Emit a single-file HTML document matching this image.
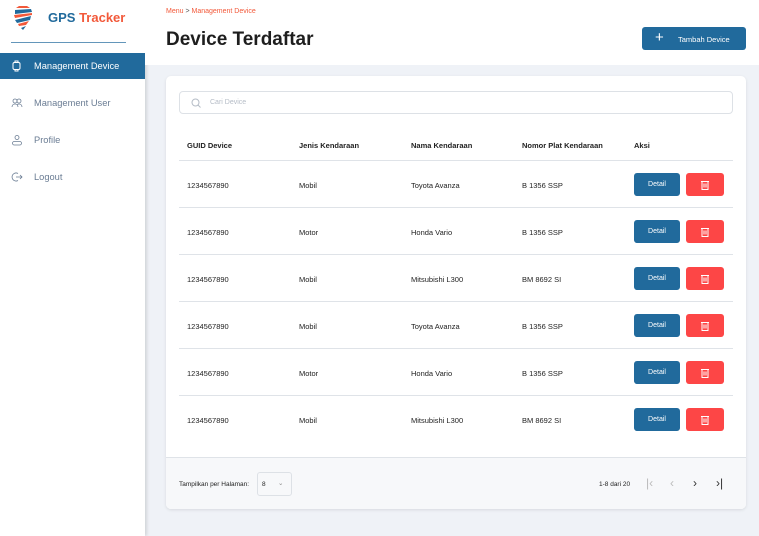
<!DOCTYPE html>
<html><head><meta charset="utf-8"><style>
*{box-sizing:border-box;margin:0;padding:0}
body{width:759px;height:536px;overflow:hidden;background:#eff2f7;font-family:"Liberation Sans",sans-serif;position:relative}
.side{position:absolute;left:0;top:0;width:145px;height:536px;background:#fff;box-shadow:2px 0 3px rgba(0,0,0,.12)}
.logo{position:absolute;left:48px;top:10px;font-weight:bold;font-size:13px;color:#216a9c}
.logo span{color:#f2593a}
.sep{position:absolute;left:11px;top:42px;width:115px;height:1px;background:#216a9c;opacity:.7}
.nav{position:absolute;left:0;width:145px;height:26px;font-size:9.3px;color:#6b7d94;padding-left:34px;display:flex;align-items:center}
.nav.act{background:#216a9c;color:#fff}
.nav svg{position:absolute;left:11px;top:7px}
.head{position:absolute;left:145px;top:0;width:614px;height:65px;background:#fff}
.crumb{position:absolute;left:166px;top:8px;font-size:7px;color:#f2593a}
.crumb b{color:#555;font-weight:normal}
h1{position:absolute;left:166px;top:29px;font-size:19px;color:#1e1e1e}
.add{position:absolute;left:642px;top:27px;width:104px;height:23px;background:#216a9c;border-radius:3px;color:#fff;font-size:7.5px}
.add span{position:absolute;left:36px;top:8px}
.add i{position:absolute;left:13px;top:3px;font-style:normal;font-size:15px;line-height:15px}
.card{position:absolute;left:166px;top:76px;width:580px;height:433px;background:#fff;border-radius:5px;box-shadow:0 1px 3px rgba(0,0,0,.1);overflow:hidden}
.search{position:absolute;left:13px;top:15px;width:554px;height:23px;border:1px solid #dde1e6;border-radius:4px;font-size:7px;color:#b5bcc6}
.search span{position:absolute;left:30px;top:7px}
.search svg{position:absolute;left:11px;top:6px}
.th{position:absolute;top:65px;font-size:7.5px;color:#222;font-weight:bold}
.row{position:absolute;left:13px;width:554px;height:47px;border-top:1px solid #dfe3e8;font-size:7.5px;color:#222}
.row span{position:absolute;top:20px}
.det{position:absolute;left:455px;top:12px;width:46px;height:23px;background:#216a9c;border-radius:3px;color:#fff;font-size:7px}
.det b{position:absolute;left:0;width:46px;text-align:center;top:8px;font-weight:normal}
.del{position:absolute;left:507px;top:12px;width:38px;height:23px;background:#fd4646;border-radius:3px}
.del svg{position:absolute;left:14px;top:7px}
.foot{position:absolute;left:0;top:381px;width:580px;height:52px;background:#f7f8fa;border-top:1px solid #dfe3e8;font-size:6.5px;color:#222}
.sel{position:absolute;left:91px;top:14px;width:35px;height:24px;border:1px solid #dde1e6;border-radius:3px;font-size:6.5px}
.pg{position:absolute;top:18px;font-size:12px;color:#bbb}
</style></head><body>
<div class="side">
<svg style="position:absolute;left:12px;top:5px" width="22" height="26" viewBox="0 0 22 26"><path d="M7 1h8l3 2H4z" fill="#f2593a"/><path d="M3 5l16-1 1 3-17 2z" fill="#216a9c"/><path d="M2 10l18-2v2L3 13z" fill="#f2593a"/><path d="M3 15l16-4-1 4-13 3z" fill="#216a9c"/><path d="M6 19l11-3-3 4-7 1z" fill="#f2593a"/><path d="M9 23l5-2-3 4z" fill="#216a9c"/></svg>
<div class="logo">GPS <span>Tracker</span></div>
<div class="sep"></div>
<div class="nav act" style="top:53px"><svg width="11" height="12" viewBox="0 0 11 12" fill="none" stroke="#fff"><rect x="2" y="2.5" width="7" height="7" rx="1.5"/><path d="M4 2.5V1h3v1.5M4 9.5V11h3V9.5"/></svg>Management Device</div>
<div class="nav" style="top:90px"><svg width="12" height="12" viewBox="0 0 12 12" fill="none" stroke="#6b7d94" stroke-width=".8"><circle cx="4" cy="4" r="2"/><circle cx="8" cy="4" r="2"/><path d="M1 10c0-2 1.5-3 3-3s3 1 3 3M6 8c.5-1 1-1 2-1 1.5 0 3 1 3 3"/></svg>Management User</div>
<div class="nav" style="top:127px"><svg width="12" height="12" viewBox="0 0 12 12" fill="none" stroke="#6b7d94" stroke-width=".8"><circle cx="6" cy="3.5" r="2"/><rect x="1.5" y="7.5" width="9" height="3.5" rx="1.7"/></svg>Profile</div>
<div class="nav" style="top:164px"><svg width="12" height="12" viewBox="0 0 12 12" fill="none" stroke="#6b7d94" stroke-width=".8"><path d="M7 2.5A4 4 0 1 0 7 9.5M5 6h6M9 4l2 2-2 2"/></svg>Logout</div>
</div>
<div class="head"></div>
<div class="crumb"><b style="color:#f2593a">Menu</b> <b>&gt;</b> Management Device</div>
<h1>Device Terdaftar</h1>
<div class="add"><i>+</i><span>Tambah Device</span></div>
<div class="card">
<div class="search"><svg width="10" height="10" viewBox="0 0 10 10" fill="none" stroke="#b5bcc6"><circle cx="4.5" cy="4.5" r="3.5"/><path d="M7 7l2.5 2.5"/></svg><span>Cari Device</span></div>
<div class="th" style="left:21px">GUID Device</div>
<div class="th" style="left:133px">Jenis Kendaraan</div>
<div class="th" style="left:245px">Nama Kendaraan</div>
<div class="th" style="left:356px">Nomor Plat Kendaraan</div>
<div class="th" style="left:468px">Aksi</div>
<div class="row" style="top:84px"><span style="left:8px">1234567890</span><span style="left:120px">Mobil</span><span style="left:232px">Toyota Avanza</span><span style="left:343px">B 1356 SSP</span><div class="det"><b>Detail</b></div><div class="del"><svg width="10" height="10" viewBox="0 0 10 10" fill="none" stroke="#fff"><rect x="2" y="1.5" width="6" height="8"/><path d="M1 1.5h8M4 3.5v4M6 3.5v4"/></svg></div></div>
<div class="row" style="top:131px"><span style="left:8px">1234567890</span><span style="left:120px">Motor</span><span style="left:232px">Honda Vario</span><span style="left:343px">B 1356 SSP</span><div class="det"><b>Detail</b></div><div class="del"><svg width="10" height="10" viewBox="0 0 10 10" fill="none" stroke="#fff"><rect x="2" y="1.5" width="6" height="8"/><path d="M1 1.5h8M4 3.5v4M6 3.5v4"/></svg></div></div>
<div class="row" style="top:178px"><span style="left:8px">1234567890</span><span style="left:120px">Mobil</span><span style="left:232px">Mitsubishi L300</span><span style="left:343px">BM 8692 SI</span><div class="det"><b>Detail</b></div><div class="del"><svg width="10" height="10" viewBox="0 0 10 10" fill="none" stroke="#fff"><rect x="2" y="1.5" width="6" height="8"/><path d="M1 1.5h8M4 3.5v4M6 3.5v4"/></svg></div></div>
<div class="row" style="top:225px"><span style="left:8px">1234567890</span><span style="left:120px">Mobil</span><span style="left:232px">Toyota Avanza</span><span style="left:343px">B 1356 SSP</span><div class="det"><b>Detail</b></div><div class="del"><svg width="10" height="10" viewBox="0 0 10 10" fill="none" stroke="#fff"><rect x="2" y="1.5" width="6" height="8"/><path d="M1 1.5h8M4 3.5v4M6 3.5v4"/></svg></div></div>
<div class="row" style="top:272px"><span style="left:8px">1234567890</span><span style="left:120px">Motor</span><span style="left:232px">Honda Vario</span><span style="left:343px">B 1356 SSP</span><div class="det"><b>Detail</b></div><div class="del"><svg width="10" height="10" viewBox="0 0 10 10" fill="none" stroke="#fff"><rect x="2" y="1.5" width="6" height="8"/><path d="M1 1.5h8M4 3.5v4M6 3.5v4"/></svg></div></div>
<div class="row" style="top:319px"><span style="left:8px">1234567890</span><span style="left:120px">Mobil</span><span style="left:232px">Mitsubishi L300</span><span style="left:343px">BM 8692 SI</span><div class="det"><b>Detail</b></div><div class="del"><svg width="10" height="10" viewBox="0 0 10 10" fill="none" stroke="#fff"><rect x="2" y="1.5" width="6" height="8"/><path d="M1 1.5h8M4 3.5v4M6 3.5v4"/></svg></div></div>
<div class="foot">
<span style="position:absolute;left:13px;top:23px">Tampilkan per Halaman:</span>
<div class="sel"><span style="position:absolute;left:4px;top:8px">8</span><span style="position:absolute;left:20px;top:6px;color:#888">&#8964;</span></div>
<span style="position:absolute;left:433px;top:23px">1-8 dari 20</span>
<span class="pg" style="left:480px">|&lsaquo;</span>
<span class="pg" style="left:504px">&lsaquo;</span>
<span class="pg" style="left:527px;color:#333">&rsaquo;</span>
<span class="pg" style="left:550px;color:#333">&rsaquo;|</span>
</div>
</div>
</body></html>
